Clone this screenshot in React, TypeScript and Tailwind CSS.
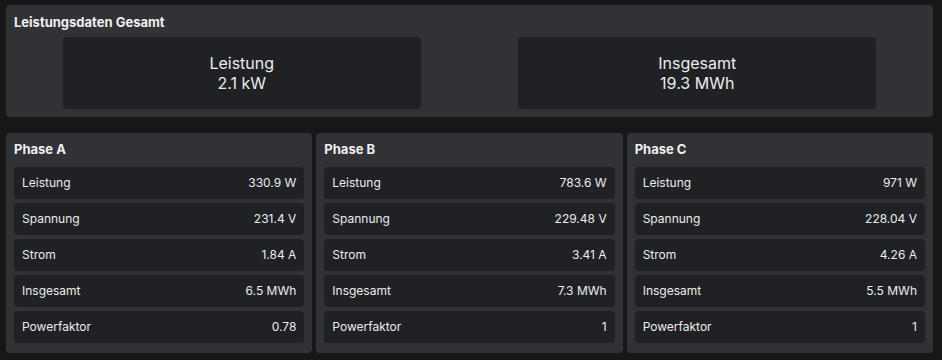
const TOTALS = [
  { label: "Leistung", value: "2.1 kW" },
  { label: "Insgesamt", value: "19.3 MWh" },
];

const PHASES = [
  {
    name: "Phase A",
    rows: [
      ["Leistung", "330.9 W"],
      ["Spannung", "231.4 V"],
      ["Strom", "1.84 A"],
      ["Insgesamt", "6.5 MWh"],
      ["Powerfaktor", "0.78"],
    ],
  },
  {
    name: "Phase B",
    rows: [
      ["Leistung", "783.6 W"],
      ["Spannung", "229.48 V"],
      ["Strom", "3.41 A"],
      ["Insgesamt", "7.3 MWh"],
      ["Powerfaktor", "1"],
    ],
  },
  {
    name: "Phase C",
    rows: [
      ["Leistung", "971 W"],
      ["Spannung", "228.04 V"],
      ["Strom", "4.26 A"],
      ["Insgesamt", "5.5 MWh"],
      ["Powerfaktor", "1"],
    ],
  },
];

function PhaseCard({ name, rows }: { name: string; rows: string[][] }) {
  return (
    <div className="flex-1 bg-[#303236] rounded-[4px] px-2 pt-2 pb-[10px]">
      <div className="text-[13px] leading-4 font-bold text-[#f0f0f0] mb-[10px]">{name}</div>
      <div className="flex flex-col gap-1">
        {rows.map(([label, value]) => (
          <div
            key={label}
            className="h-8 flex items-center justify-between px-2 rounded-[4px] bg-[#202124] text-[12px] text-[#ececec]"
          >
            <span>{label}</span>
            <span>{value}</span>
          </div>
        ))}
      </div>
    </div>
  );
}

export default function App() {
  return (
    <div
      className="min-h-screen bg-[#161719] pl-[6px] pr-[9px] pt-[5px]"
      style={{ fontFamily: "Inter, 'Noto Sans', sans-serif" }}
    >
      <div className="bg-[#303236] rounded-[4px] px-2 pt-[9px] pb-2">
        <div className="text-[13px] leading-4 font-bold text-[#f0f0f0]">Leistungsdaten Gesamt</div>
        <div className="grid grid-cols-2 mt-[7px]">
          {TOTALS.map((t) => (
            <div key={t.label} className="flex justify-center">
              <div className="w-[358px] h-[72px] rounded-[4px] bg-[#202124] flex flex-col items-center justify-center text-[16px] leading-5 text-[#ececec]">
                <span>{t.label}</span>
                <span>{t.value}</span>
              </div>
            </div>
          ))}
        </div>
      </div>

      <div className="flex gap-1 mt-4">
        {PHASES.map((p) => (
          <PhaseCard key={p.name} name={p.name} rows={p.rows} />
        ))}
      </div>
    </div>
  );
}
